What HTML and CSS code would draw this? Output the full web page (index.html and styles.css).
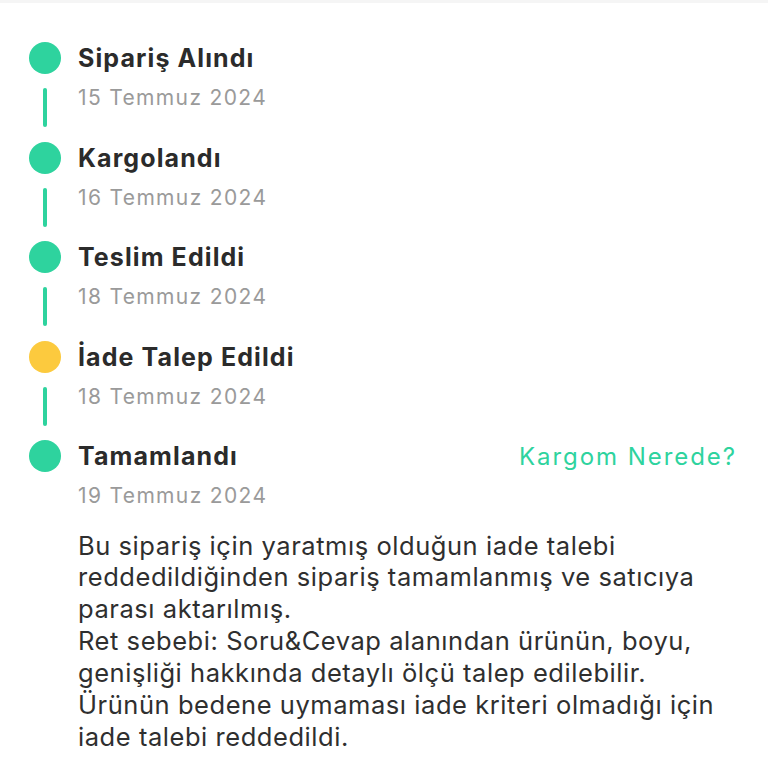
FILE: index.html
```html
<!DOCTYPE html>
<html lang="tr">
<head>
<meta charset="utf-8">
<link rel="stylesheet" href="styles.css">
</head>
<body>
<div class="topbar"></div>
<div class="timeline">
  <div class="step">
    <span class="dot green"></span>
    <span class="title">Sipariş Alındı</span>
    <span class="line"></span>
    <span class="date">15 Temmuz 2024</span>
  </div>
  <div class="step">
    <span class="dot green"></span>
    <span class="title">Kargolandı</span>
    <span class="line"></span>
    <span class="date">16 Temmuz 2024</span>
  </div>
  <div class="step">
    <span class="dot green"></span>
    <span class="title">Teslim Edildi</span>
    <span class="line"></span>
    <span class="date">18 Temmuz 2024</span>
  </div>
  <div class="step">
    <span class="dot yellow"></span>
    <span class="title">İade Talep Edildi</span>
    <span class="line"></span>
    <span class="date">18 Temmuz 2024</span>
  </div>
  <div class="step last">
    <span class="dot green"></span>
    <span class="title">Tamamlandı</span>
    <a class="link">Kargom Nerede?</a>
    <span class="spacer"></span>
    <span class="date">19 Temmuz 2024</span>
  </div>
  <p class="note">Bu sipariş için yaratmış olduğun iade talebi<br>reddedildiğinden sipariş tamamlanmış ve satıcıya<br>parası aktarılmış.<br>Ret sebebi: Soru&amp;Cevap alanından ürünün, boyu,<br>genişliği hakkında detaylı ölçü talep edilebilir.<br>Ürünün bedene uymaması iade kriteri olmadığı için<br>iade talebi reddedildi.</p>
</div>
</body>
</html>
```

FILE: styles.css
```css
* { box-sizing: border-box; }
html, body { margin: 0; padding: 0; background: #fff; }
body { font-family: Inter, "Open Sans", "Liberation Sans", sans-serif; color: #2b2b2b; }
.topbar { height: 3px; background: #f5f5f5; }
.timeline { padding: 39px 32px 0 29px; }
.step {
  display: grid;
  grid-template-columns: 32px 1fr auto;
  grid-template-rows: 32px 67.5px;
  column-gap: 17px;
  align-items: center;
}
.dot { width: 32px; height: 32px; border-radius: 50%; }
.green { background: #2ed39e; }
.yellow { background: #fcca3e; }
.title { font-size: 25px; font-weight: 700; letter-spacing: 1.1px; grid-column: 2 / 4; }
.step.last .title { grid-column: 2; }
.link { font-size: 24px; letter-spacing: 1.95px; color: #2ed39e; grid-column: 3; margin-right: -1px; }
.line { width: 4px; height: 39px; border-radius: 2px; background: #2ed39e; justify-self: center; }
.date { font-size: 21px; letter-spacing: 1.35px; color: #9a9a9a; align-self: start; margin-top: 11px; grid-column: 2 / 4; }
.spacer { width: 32px; }
.note { margin: -10px 0 0 49px; font-size: 25.5px; line-height: 31.9px; letter-spacing: 0.55px; color: #2f2f2f; white-space: nowrap; }
```
